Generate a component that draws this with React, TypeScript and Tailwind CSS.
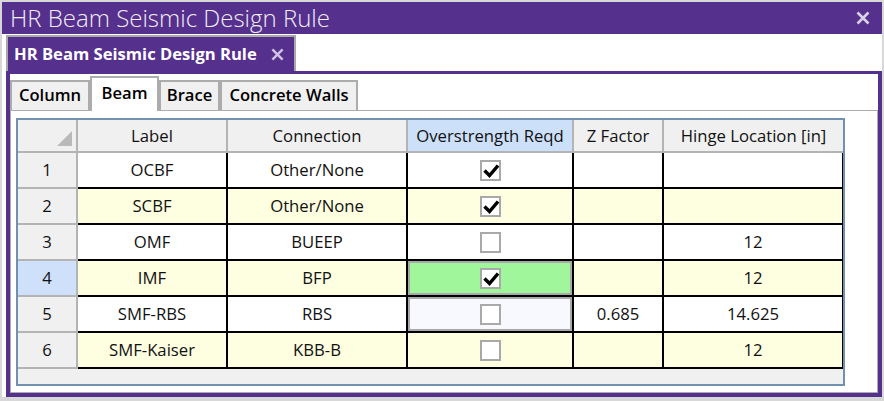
import React from 'react'

const FONT = { fontFamily: '"Open Sans", "Noto Sans", sans-serif' }

const TABS = [
  { label: 'Column', w: 'w-[80px]' },
  { label: 'Beam', w: 'w-[69px]', active: true },
  { label: 'Brace', w: 'w-[61px]' },
  { label: 'Concrete Walls', w: 'w-[138px]' },
]

const ROWS = [
  { label: 'OCBF', conn: 'Other/None', over: true, z: '', hinge: '' },
  { label: 'SCBF', conn: 'Other/None', over: true, z: '', hinge: '' },
  { label: 'OMF', conn: 'BUEEP', over: false, z: '', hinge: '12' },
  { label: 'IMF', conn: 'BFP', over: true, z: '', hinge: '12' },
  { label: 'SMF-RBS', conn: 'RBS', over: false, z: '0.685', hinge: '14.625' },
  { label: 'SMF-Kaiser', conn: 'KBB-B', over: false, z: '', hinge: '12' },
]

function CloseX({ size, color }: { size: number; color: string }) {
  return (
    <svg width={size} height={size} viewBox="0 0 14 14">
      <path d="M1.5 1.5 L12.5 12.5 M12.5 1.5 L1.5 12.5" stroke={color} strokeWidth="2.6" fill="none" />
    </svg>
  )
}

function CheckBox({ checked }: { checked: boolean }) {
  return (
    <div className="flex h-[21px] w-[21px] items-center justify-center border-2 border-[#a9a9a9] bg-white">
      {checked && (
        <svg width="17" height="17" viewBox="0 0 17 17">
          <path d="M2.5 8.5 L7.5 13.5 L16 3.5" stroke="#000" strokeWidth="3.4" fill="none" />
        </svg>
      )}
    </div>
  )
}

export default function App() {
  return (
    <div className="flex h-[401px] w-[884px] flex-col bg-[#d8d8d8] px-[2px] pt-[2px] pb-[4px]" style={FONT}>
      {/* Title bar */}
      <div className="flex h-[32px] shrink-0 items-center justify-between bg-[#55308d] pl-[8px] pr-[12px]">
        <span className="text-[24px] font-light leading-none text-[#f2eef8]">HR Beam Seismic Design Rule</span>
        <CloseX size={14} color="#d9d0ea" />
      </div>

      <div className="flex flex-1 flex-col bg-white pt-[1px] pl-[4px]">
        {/* Document tab */}
        <div className="flex h-[36px] w-[290px] items-center justify-between border-2 border-b-0 border-[#a9a9a9] bg-[#55308d] pl-[6px] pr-[10px]">
          <span className="text-[16.6px] font-bold text-white">HR Beam Seismic Design Rule</span>
          <CloseX size={13} color="#cfc3e4" />
        </div>

        {/* Content frame */}
        <div className="flex flex-1 flex-col border-x-4 border-t-[3px] border-b-4 border-[#55308d] pt-[2px]">
          <div className="flex h-[34px] items-end">
            {TABS.map((t) =>
              t.active ? (
                <div
                  key={t.label}
                  className={`${t.w} relative z-10 flex h-[35px] -mb-[1px] items-center justify-center border-2 border-b-0 border-[#acacac] bg-white pb-[3px] text-[16.6px] font-semibold text-black`}
                >
                  {t.label}
                </div>
              ) : (
                <div
                  key={t.label}
                  className={`${t.w} flex h-[30px] items-center justify-center border-2 border-b-0 border-[#acacac] bg-[#f0f0f0] pb-[2px] text-[16.6px] font-semibold text-black`}
                >
                  {t.label}
                </div>
              )
            )}
          </div>

          {/* Tab panel */}
          <div className="flex-1 border border-[#acacac] bg-white pt-[7px] pl-[5px]">
            <div className="flex h-[268px] w-[829px] flex-col border-2 border-[#7191b3] bg-[#f0f0f0] text-[16.7px] text-[#111]">
              {/* Header */}
              <div className="flex h-[33px] border-b-2 border-[#b4b4b4] bg-[#f0f0f0]">
                <div className="relative w-[60px] border-r-2 border-[#b4b4b4]">
                  <svg className="absolute right-[4px] bottom-[5px]" width="15" height="15" viewBox="0 0 15 15">
                    <path d="M15 0 L15 15 L0 15 Z" fill="#b9b9b9" />
                  </svg>
                </div>
                <div className="flex w-[150px] items-center justify-center border-r-2 border-[#b4b4b4]">Label</div>
                <div className="flex w-[180px] items-center justify-center border-r-2 border-[#b4b4b4]">Connection</div>
                <div className="flex w-[166px] items-center justify-center border-r-2 border-[#b4b4b4] bg-[#cde0fa]">Overstrength Reqd</div>
                <div className="flex w-[90px] items-center justify-center border-r-2 border-[#b4b4b4]">Z Factor</div>
                <div className="flex w-[179px] items-center justify-center">Hinge Location [in]</div>
              </div>

              {ROWS.map((r, i) => {
                const bg = i % 2 === 1 ? 'bg-[#fefee0]' : 'bg-white'
                const overCell =
                  i === 3
                    ? 'bg-[#a0f79b] shadow-[inset_0_0_0_2px_#a9a9a9]'
                    : i === 4
                      ? 'bg-[#f8f8ff] shadow-[inset_0_0_0_2px_#a9a9a9]'
                      : ''
                return (
                  <div key={r.label} className={`flex h-[36px] ${bg}`}>
                    <div
                      className={`flex w-[60px] items-center justify-center border-r-2 border-b-2 border-[#b4b4b4] ${
                        i === 3 ? 'bg-[#cfe0fb]' : 'bg-[#f0f0f0]'
                      }`}
                    >
                      {i + 1}
                    </div>
                    <div className="flex w-[150px] items-center justify-center border-r-2 border-b-2 border-black">{r.label}</div>
                    <div className="flex w-[180px] items-center justify-center border-r-2 border-b-2 border-black">{r.conn}</div>
                    <div className={`flex w-[166px] items-center justify-center border-r-2 border-b-2 border-black ${overCell}`}>
                      <CheckBox checked={r.over} />
                    </div>
                    <div className="flex w-[90px] items-center justify-center border-r-2 border-b-2 border-black">{r.z}</div>
                    <div className="flex w-[179px] items-center justify-center border-r border-b-2 border-black">{r.hinge}</div>
                  </div>
                )
              })}
            </div>
          </div>
        </div>
      </div>
    </div>
  )
}
